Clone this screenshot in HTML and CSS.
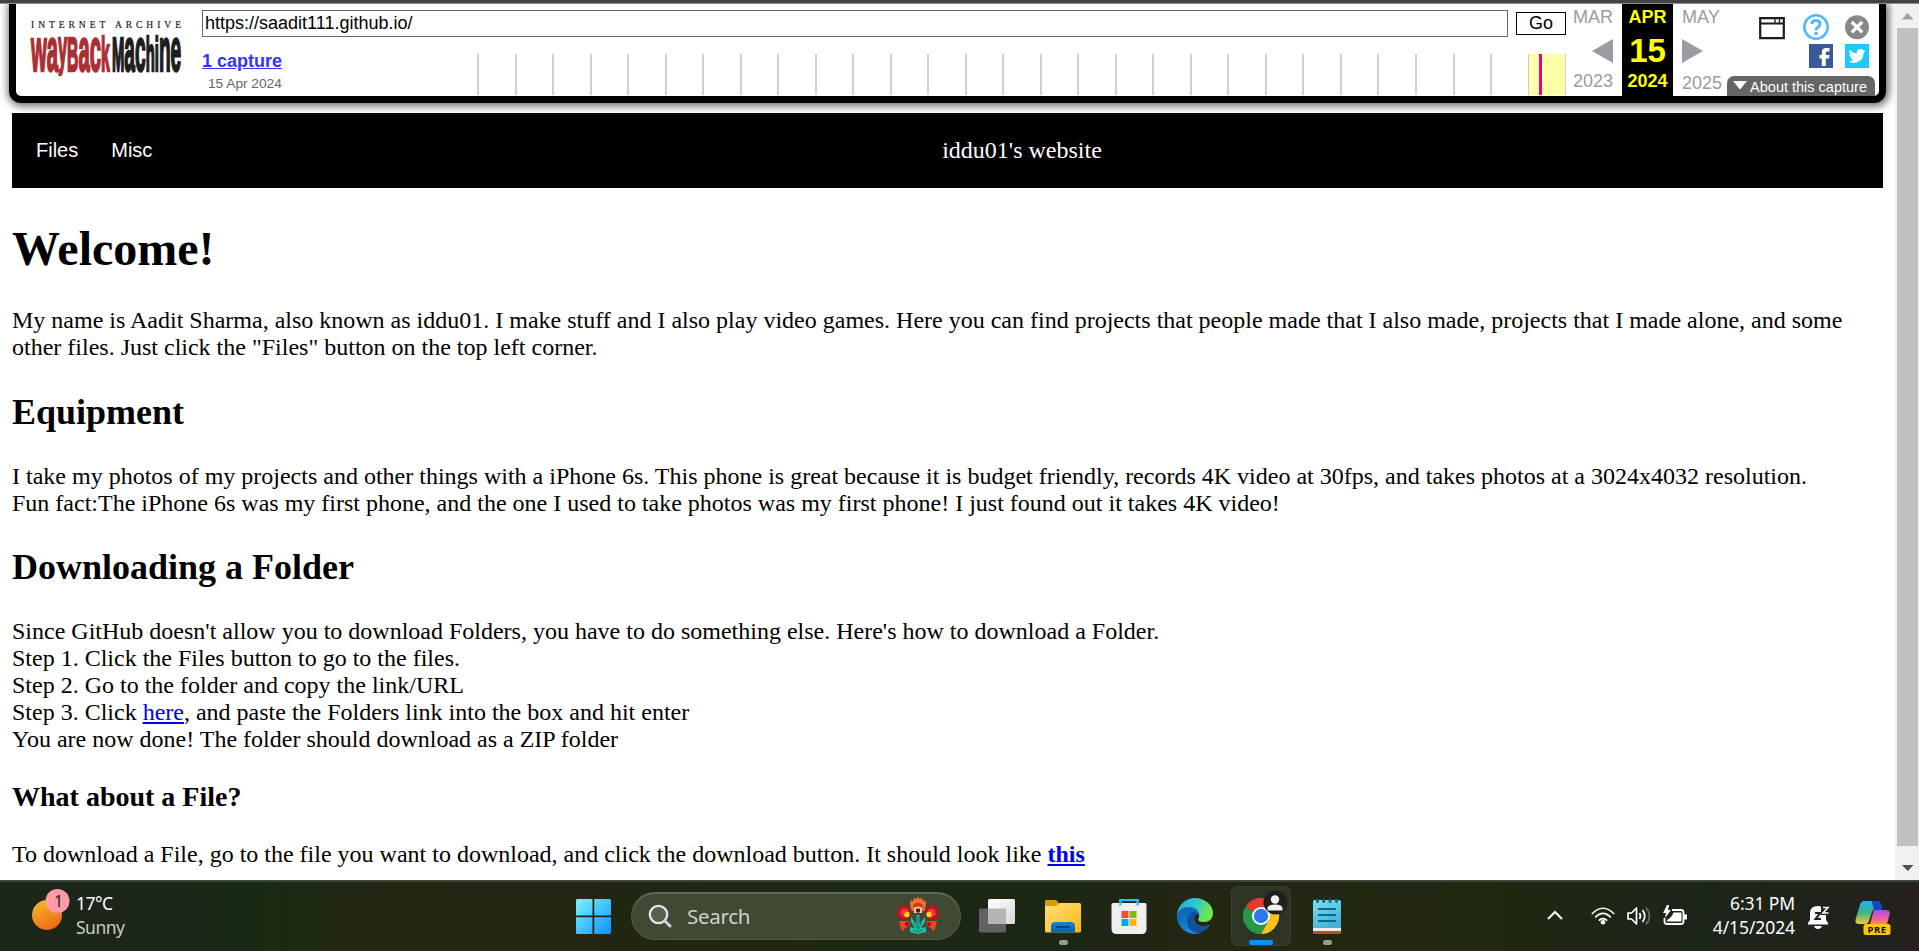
FILE: index.html
```html
<!DOCTYPE html>
<html lang="en">
<head>
<meta charset="utf-8">
<title>iddu01's website</title>
<link rel="stylesheet" href="styles.css">
</head>
<body>
<div class="window-edge"></div>
<div class="viewport">
  <div class="page">
    <header class="wayback">
      <svg class="wb-logo" width="160" height="86" viewBox="0 0 160 86">
        <text class="ia-name" x="7" y="21.5" textLength="150">INTERNET ARCHIVE</text>
        <g transform="translate(7 64.5) scale(.3 1)">
          <text class="wb-word wb-red" textLength="262" lengthAdjust="spacingAndGlyphs"><tspan class="low">wa</tspan><tspan class="mid" dy="-6">y</tspan><tspan class="cap" dy="6">B</tspan><tspan class="low">ac</tspan><tspan class="cap">k</tspan></text>
          <text class="wb-word wb-dark" x="270" textLength="231" lengthAdjust="spacingAndGlyphs"><tspan class="cap">M</tspan><tspan class="low">ac</tspan><tspan class="cap">hi</tspan><tspan class="low">ne</tspan></text>
        </g>
      </svg>
      <div class="wb-main">
        <div class="wb-form">
          <div class="wb-url">https://saadit111.github.io/</div>
          <div class="wb-go">Go</div>
        </div>
        <div class="wb-history">
          <div class="wb-captures">
            <a class="wb-count">1 capture</a>
            <span class="wb-range">15 Apr 2024</span>
          </div>
          <div class="wb-spark"><div class="wb-years"></div><div class="wb-current"></div></div>
        </div>
      </div>
      <div class="wb-dates">
        <div class="wb-col wb-prev"><span>MAR</span><svg width="22" height="24" viewBox="0 0 22 24"><path d="M22 0V24L1 12z" fill="#999ca0"/></svg><span>2023</span></div>
        <div class="wb-col wb-now"><b>APR</b><b class="wb-day">15</b><b>2024</b></div>
        <div class="wb-col wb-next"><span>MAY</span><svg width="22" height="24" viewBox="0 0 22 24"><path d="M0 0V24L21 12z" fill="#999ca0"/></svg><span>2025</span></div>
      </div>
      <div class="wb-tools">
        <div class="wb-icons">
          <svg width="26" height="26" viewBox="0 0 26 26"><path d="M1.2 4.2H24.8V24.2H1.2zM1 9.5H25" fill="none" stroke="#1c1c1c" stroke-width="2.2"/><path d="M16 4V9M20.5 4V9" stroke="#1c1c1c" stroke-width="1.3"/></svg>
          <svg width="26" height="26" viewBox="0 0 26 26"><circle cx="13" cy="13" r="11.7" fill="none" stroke="#55b9f5" stroke-width="2.6"/><path d="M8.8 10Q9 6.5 13 6.5T17 10Q17 12 14.8 13.2Q13 14.2 13 16.5" fill="none" stroke="#55b9f5" stroke-width="3"/><path d="M11.4 18h3.3v3h-3.3z" fill="#55b9f5"/></svg>
          <svg width="24" height="26" viewBox="0 0 24 26"><circle cx="12" cy="13.2" r="12" fill="#888"/><path d="M6.8 8l10.4 10.4M17.2 8L6.800 18.400" stroke="#fff" stroke-width="3.2"/></svg>
        </div>
        <div class="wb-icons wb-social">
          <svg width="24" height="24" viewBox="0 0 24 24"><path d="M0 0H24V24H0z" fill="#3b5998"/><path d="M12.800 22V14.500H10.500V11H12.800V8.500Q12.800 4 17 4H20.500V7.500H18.300Q16.800 7.500 16.800 9V11H20.500L20 14.500H16.800V22z" fill="#fff"/></svg>
          <svg width="24" height="24" viewBox="0 0 24 24"><path d="M0 0H24V24H0z" fill="#1dcaff"/><path transform="translate(3.600 3.600) scale(.7)" fill="#fff" d="M24 4.600a10 10 0 0 1-2.800.800 5 5 0 0 0 2.100-2.700 10 10 0 0 1-3.100 1.200 4.900 4.900 0 0 0-8.400 4.500A14 14 0 0 1 1.700 3.200 4.900 4.900 0 0 0 3.200 9.700a5 5 0 0 1-2.200-.600 4.900 4.900 0 0 0 3.900 4.900 5 5 0 0 1-2.200.100 4.900 4.900 0 0 0 4.600 3.400A10 10 0 0 1 0 19.500a14 14 0 0 0 21.500-12.400A10 10 0 0 0 24 4.600z"/></svg>
        </div>
        <div class="wb-about"><svg width="14" height="9" viewBox="0 0 14 9"><path d="M0 0H14L7 8.500z" fill="#fff"/></svg><span>About this capture</span></div>
      </div>
    </header>
    <nav class="site-nav">
      <div class="nav-links"><a>Files</a><a>Misc</a></div>
      <span>iddu01's website</span>
    </nav>
    <main class="content">
      <h1>Welcome!</h1>
      <p class="intro">My name is Aadit Sharma, also known as iddu01. I make stuff and I also play video games. Here you can find projects that people made that I also made, projects that I made alone, and some other files. Just click the "Files" button on the top left corner.</p>
      <h2>Equipment</h2>
      <p>I take my photos of my projects and other things with a iPhone 6s. This phone is great because it is budget friendly, records 4K video at 30fps, and takes photos at a 3024x4032 resolution.<br>Fun fact:The iPhone 6s was my first phone, and the one I used to take photos was my first phone! I just found out it takes 4K video!</p>
      <h2>Downloading a Folder</h2>
      <p>Since GitHub doesn't allow you to download Folders, you have to do something else. Here's how to download a Folder.<br>Step 1. Click the Files button to go to the files.<br>Step 2. Go to the folder and copy the link/URL<br>Step 3. Click <a href="#">here</a>, and paste the Folders link into the box and hit enter<br>You are now done! The folder should download as a ZIP folder</p>
      <h3>What about a File?</h3>
      <p>To download a File, go to the file you want to download, and click the download button. It should look like <a href="#"><b>this</b></a></p>
    </main>
  </div>
  <div class="scrollbar">
    <svg width="24" height="24" viewBox="0 0 24 24"><path d="M6.500 15.500L12.500 9L18.500 15.500z" fill="#a3a3a3"/></svg>
    <div class="thumb"></div>
    <svg width="24" height="34" viewBox="0 0 24 34"><path d="M7 19H18.500L12.700 25z" fill="#505050"/></svg>
  </div>
</div>
<footer class="taskbar">
  <div class="weather">
    <svg width="40" height="44" viewBox="0 0 40 44">
      <defs><linearGradient id="sun" x1=".2" y1="0" x2=".7" y2="1"><stop offset="0" stop-color="#f3b62c"/><stop offset="1" stop-color="#f06810"/></linearGradient></defs>
      <circle cx="15" cy="28" r="15" fill="url(#sun)"/><circle cx="25.500" cy="14" r="12" fill="#ff9aa6"/>
      <text class="badge" x="26.500" y="19.500">1</text>
    </svg>
    <div class="weather-text"><span>17°C</span><span class="dim">Sunny</span></div>
  </div>
  <div class="apps">
    <svg class="start" width="35" height="35" viewBox="0 0 35 35">
      <defs><linearGradient id="win" gradientUnits="userSpaceOnUse" x1="0" y1="0" x2="35" y2="35"><stop offset="0" stop-color="#7df3ff"/><stop offset="1" stop-color="#0a93ff"/></linearGradient></defs>
      <path d="M1.500 0H16.500V16.500H0V1.500Q0 0 1.500 0zM18.300 0H33.500Q35 0 35 1.500V16.500H18.300zM0 18.300H16.500V35H1.500Q0 35 0 33.500zM18.300 18.300H35V33.500Q35 35 33.500 35H18.300z" fill="url(#win)"/>
    </svg>
    <div class="search">
      <svg width="24" height="24" viewBox="0 0 24 24"><circle cx="10.500" cy="10.500" r="8.700" fill="#fff2" stroke="#e2e5ea" stroke-width="2.300"/><path d="M17 17L22 22" stroke="#cdd2de" stroke-width="3" stroke-linecap="round"/></svg>
      <span>Search</span>
      <svg width="44" height="40" viewBox="0 0 44 40">
        <path d="M14 8L14.500 4.500 17 5 18 2 20.500 3 22 .500 23.500 3 26 2 27 5 29.500 4.500 30 8 28.500 15H15.500z" fill="#f0702b"/><path d="M17 9Q22 4 27 9L25 15H19z" fill="#c93a10"/><path d="M18 12Q22 9 26 12V17H18z" fill="#ffd0b0"/><circle cx="22" cy="14.500" r="2.300" fill="#55151c"/>
        <path d="M.500 17L2 14 2.500 11 6 10.500 8 8.500 11 10.500 14 12 15 19 10 24 3 23 2.500 20zM43.500 17L42 14 41.500 11 38 10.500 36 8.500 33 10.500 30 12 29 19 34 24 41 23 41.500 20z" fill="#c9101e"/><path d="M4 18L6 13 11 13 13 18 9 22zM40 18L38 13 33 13 31 18 35 22z" fill="#ef3b3a"/><circle cx="11" cy="18.500" r="2.700" fill="#ffd51c"/><circle cx="33" cy="18.500" r="2.700" fill="#ffd51c"/>
        <path d="M3 25L13 25 14 29 9 32 7 35 5 33zM41 25L31 25 30 29 35 32 37 35 39 33z" fill="#f24322"/><circle cx="11" cy="28" r="2" fill="#8f1420"/><circle cx="33" cy="28" r="2" fill="#8f1420"/>
        <path d="M22 38L14 36 14 31 19 32 15 26 15 21 20.500 28 20.500 19 23.500 19 23.500 28 29 21 29 26 25 32 30 31 30 36z" fill="#1fbfa3"/><path d="M22 20V34M17 34L22 36L27 34M18 26L22 33L26 26" stroke="#117b6d" fill="none"/>
      </svg>
    </div>
    <div class="app"><svg width="36" height="36" viewBox="0 0 36 36"><defs><linearGradient id="tv" x2="1" y2="1"><stop stop-color="#fff"/><stop offset="1" stop-color="#d8d8d8"/></linearGradient></defs><rect y="10.500" width="27" height="24" rx="1.500" fill="#626264"/><rect x="9" y="1" width="27" height="25" rx="1.500" fill="url(#tv)"/><path d="M9 10.500H27V26H9z" fill="#b5b6b4"/></svg></div>
    <div class="app"><svg width="36" height="36" viewBox="0 0 36 36"><defs><linearGradient id="fo" x2="1" y2="1"><stop stop-color="#ffe07c"/><stop offset="1" stop-color="#fbb612"/></linearGradient><linearGradient id="fb" x2="0" y2="1"><stop stop-color="#1587d8"/><stop offset="1" stop-color="#0d5ea8"/></linearGradient></defs><path d="M0 3.500Q0 2 1.500 2H11L15 6V12H0z" fill="#db9b0c"/><path d="M0 8H11L15 5H34.500Q36 5 36 6.500V33Q36 34.500 34.500 34.500H1.500Q0 34.500 0 33z" fill="url(#fo)"/><path d="M6 34.500V28Q6 24 10 24H26Q30 24 30 28V34.500z" fill="url(#fb)"/><path d="M11 29H25" stroke="#08468a" stroke-width="2"/></svg><i class="dot"></i></div>
    <div class="app"><svg width="36" height="36" viewBox="0 0 36 36"><path d="M9.300 8V2.200H26.700V8" fill="none" stroke="#35b8f4" stroke-width="2.300"/><path d="M.5 6.500Q.5 5 2 5H34Q35.500 5 35.500 6.500V31Q35.500 36 30.500 36H5.500Q.5 36 .5 31z" fill="#efefef"/><path d="M9.300 4V7.500M26.700 4V7.500" stroke="#35b8f4" stroke-width="2.300"/><path d="M10.500 13H17.500V20H10.500z" fill="#f25022"/><path d="M18.500 13H25.500V20H18.500z" fill="#7fba00"/><path d="M10.500 21H17.500V28H10.500z" fill="#00a4ef"/><path d="M18.500 21H25.500V28H18.500z" fill="#ffb900"/></svg></div>
    <div class="app"><svg width="36" height="36" viewBox="0 0 36 36"><defs><linearGradient id="e1" x2="1" y2=".3"><stop stop-color="#2aa5dd"/><stop offset=".5" stop-color="#2cc3d5"/><stop offset="1" stop-color="#70e848"/></linearGradient><linearGradient id="e2" x2=".6" y2="1"><stop stop-color="#0c59a5"/><stop offset="1" stop-color="#1791df"/></linearGradient></defs><path d="M0 18C0 8 8 0 18 0S36 7 36 15C36 21 32 24 27 24C22 24 20.500 22.500 21.500 20.500C24 16 20 10 12 10C5 10 1 14 0 18z" fill="url(#e1)"/><path d="M0 18C1 12 6 9 12 9C18 9 22 12 22 17C21 13 11 13 11 22C11 28 15 35 23 35.300C10 38.500 0 29 0 18z" fill="url(#e2)"/><path d="M17 13.500C14 14 10 17 10 23C10 29 15 35 22 35.500C27 34 31 31 33 27.500C33 26.500 32 26.500 31 27C23 30 16 25 18 18.500Q19 16 22 17Q21 14 17 13.500z" fill="#124f9c"/></svg></div>
    <div class="app active"><svg width="46" height="46" viewBox="0 0 46 46">
      <path d="M18 25L2.400 16A18 18 0 0 1 33.600 16H18z" fill="#e5392e"/><path d="M18 25L25.800 29.500 18 43A18 18 0 0 1 2.400 16z" fill="#25984b"/><path d="M18 16H33.600A18 18 0 0 1 18 43L25.800 29.500z" fill="#fcc21b"/><circle cx="18" cy="25" r="9" fill="#fff"/><circle cx="18" cy="25" r="7.200" fill="#2a78ee"/>
      <circle cx="32.500" cy="11.500" r="12" fill="#1f1f1f"/><circle cx="32" cy="8.500" r="4.200" fill="#f1f1f1"/><path d="M24.500 19.500V17Q25 13.500 32 13.500T39.500 17V19.500z" fill="#f1f1f1"/></svg><i class="dot wide"></i></div>
    <div class="app"><svg width="28" height="36" viewBox="0 0 28 36"><defs><linearGradient id="np" x2=".5" y2="1"><stop stop-color="#7fdcf0"/><stop offset="1" stop-color="#45b3d3"/></linearGradient></defs><path d="M0 31H28V34.500Q28 36 26.500 36H1.500Q0 36 0 34.500z" fill="#b95411"/><path d="M0 29H28V33H0z" fill="#eee"/><path d="M0 3.500Q0 2 1.500 2H26.500Q28 2 28 3.500V30H0z" fill="url(#np)"/><path d="M4.500 2V3.500M10.700 2V3.500M17 2V3.500M23.500 2V3.500" stroke="#0a5e80" stroke-width="2.800" stroke-linecap="round"/><path d="M5 11H23M5 17H23M5 23H23" stroke="#08688d" stroke-width="2"/></svg><i class="dot"></i></div>
  </div>
  <div class="tray">
    <svg class="chevron" width="16" height="10" viewBox="0 0 16 10"><path d="M1 9L8 2L15 9" fill="none" stroke="#fff" stroke-width="2"/></svg>
    <svg class="wifi" width="24" height="18" viewBox="0 0 24 18"><path d="M.8 7Q12-4.500 23.200 7M4.300 10.400Q12 2.500 19.700 10.400M7.800 13.700Q12 9.500 16.200 13.700" fill="none" stroke="#fff" stroke-width="1.700"/><circle cx="12" cy="15.300" r="2.300" fill="#fff"/></svg>
    <svg class="sound" width="26" height="20" viewBox="0 0 26 20"><path d="M1 7H4.500L9.500 2V18L4.500 13H1z" fill="none" stroke="#fff" stroke-width="1.700" stroke-linejoin="round"/><path d="M12.500 7Q14.500 10 12.500 13M15.500 4Q20 10 15.500 16" fill="none" stroke="#fff" stroke-width="1.700"/><path d="M19 1.500Q26 10 19 18.500" fill="none" stroke="#667064" stroke-width="1.700"/></svg>
    <svg class="battery" width="25" height="21" viewBox="0 0 25 21"><path d="M9 5H18Q20.500 5 20.500 7.500V16.500Q20.500 19 18 19H4Q1.500 19 1.500 16.500V13" fill="none" stroke="#fff" stroke-width="1.800"/><path d="M10.500 7.500H18.500V16.500H4V15Q8.500 13 10.500 7.500z" fill="#fff"/><path d="M21 9.500H24V14.500H21z" fill="#fff"/><path d="M4 0L0 8H3L2 13L8 5H5L6 0z" fill="#fff"/></svg>
    <div class="clock"><span>6:31 PM</span><span>4/15/2024</span></div>
    <svg class="bell" width="22" height="24" viewBox="0 0 22 24"><path d="M0 18L2 15V8Q2 1 10 1Q18 1 18 8V15L20 18V19.500H0z" fill="#fff"/><path d="M6 21H14Q13 24 10 24T6 21z" fill="#fff"/><path d="M7 8H12.500L7.500 14H13" fill="none" stroke="#1c2519" stroke-width="2"/><path d="M13 1H22V10H13z" fill="#1c2519"/><path d="M15 2.500H20L15 8H20.500" fill="none" stroke="#fff" stroke-width="1.600"/></svg>
    <svg class="copilot" width="36" height="36" viewBox="0 0 36 36"><defs><linearGradient id="c1" x2="0" y2="1"><stop stop-color="#27aef5"/><stop offset=".5" stop-color="#3bb487"/><stop offset="1" stop-color="#f7c631"/></linearGradient><linearGradient id="c2" x2="0" y2="1"><stop stop-color="#a64bf0"/><stop offset=".6" stop-color="#ee6399"/><stop offset="1" stop-color="#f58a60"/></linearGradient></defs><path d="M9 1H22Q25 1 26 5L27 9H20Q18 9 17 12L14 21Q13 24 10 24H4Q-1 24 1 18L5 5Q6 1 9 1z" fill="url(#c1)"/><path d="M17 1H22Q25 1 26 5L27.500 10H21Q19 10 18 7z" fill="#1743c7"/><path d="M20 10H31Q36 10 34.500 15L32 24H15L18 13Q18.500 10 20 10z" fill="url(#c2)"/><rect x="8.500" y="24" width="27" height="11" rx="2.500" fill="#fbc513"/><text class="pre" x="22" y="32.800">PRE</text></svg>
  </div>
</footer>
</body>
</html>
```
FILE: styles.css
```css
* { box-sizing: border-box; }
body { margin: 0; width: 1919px; height: 951px; overflow: hidden; display: flex; flex-direction: column; background: #fff; color: #000; font: 24px/27px "Liberation Serif", serif; }
svg { display: block; flex: none; }
.window-edge { height: 4px; flex: none; background: #434343; border-bottom: 1px solid #8d8d8d; }
.viewport { height: 876px; display: flex; flex: none; }
.page { width: 1895px; flex: none; overflow: hidden; }

/* Archive toolbar */
.wayback { height: 99px; width: 1877px; margin-left: 9px; border: 7px solid #000; border-top: 0; border-radius: 0 0 12px 12px; box-shadow: 1px 1px 8px 2px #0009; background: #fff; display: flex; font: 18px/20px "Liberation Sans", Arial, sans-serif; }
.wb-logo { margin: 2px 0 0 8px; overflow: visible; }
.ia-name { font: 9.500px "Liberation Serif", serif; fill: #222; stroke: #222; stroke-width: .2; }
.wb-word { font-family: "Liberation Sans", Arial, sans-serif; font-weight: 700; stroke-width: 2.500px; }
.wb-red { fill: #ab2e33; stroke: #ab2e33; }
.wb-dark { fill: #1d1d1d; stroke: #1d1d1d; }
.low { font-size: 62px; }
.mid { font-size: 50px; }
.cap { font-size: 48px; }
.wb-main { width: 1364px; margin-left: 18px; }
.wb-form { display: flex; justify-content: space-between; padding-top: 6px; }
.wb-url { width: 1306px; height: 27px; border: 1px solid #666; padding: 2px 2px 0; }
.wb-go { width: 50px; height: 23px; margin-top: 2px; border: 1px solid #000; text-align: center; }
.wb-history { display: flex; justify-content: space-between; }
.wb-captures { padding-top: 15px; }
.wb-count { display: block; font-weight: 700; color: #33f; text-decoration: underline; line-height: 19px; }
.wb-range { display: block; font-size: 13.700px; color: #666; padding: 3px 0 0 6px; }
.wb-spark { display: flex; width: 1089px; height: 41px; margin-top: 17px; border-right: 1px solid #ccc; }
.wb-years { width: 1051px; background: repeating-linear-gradient(90deg, #d0d0d0 0 2px, transparent 2px 37.520px); }
.wb-current { flex: 1; background: linear-gradient(90deg, #ccc 0 1.500px, #ffffa5 1.500px 11px, #ec008c 11px 14px, #ffffa5 14px); }
.wb-dates { display: flex; color: #99a; }
.wb-col { height: 92px; display: flex; flex-direction: column; }
.wb-prev { width: 56px; padding-right: 9px; align-items: flex-end; }
.wb-now { width: 51px; background: #000; color: #ff0; align-items: center; }
.wb-next { width: 54px; padding-left: 9px; }
.wb-col > :first-child { margin-top: 3px; }
.wb-col svg { margin: 12px 0 8px; }
.wb-next span:last-child { margin-top: 2px; }
.wb-day { font-size: 33px; line-height: 36px; margin: 6px 0 2px; }
.wb-tools { width: 148px; height: 92px; display: flex; flex-direction: column; }
.wb-icons { display: flex; justify-content: flex-end; padding: 10px 6px 0 0; gap: 16px; }
.wb-icons svg:first-child:not(.wb-social svg) { margin-right: 2px; }
.wb-social { gap: 12px; padding-top: 4px; }
.wb-about { height: 20px; margin-top: auto; background: #666; color: #fff; border-radius: 7px 7px 0 0; display: flex; align-items: center; justify-content: space-between; padding: 2px 8px 0 6px; font-size: 14.500px; line-height: 18px; }
.wb-about svg { margin-top: -3px; }

/* Site */
.site-nav { width: 1871px; height: 75px; margin: 10px 0 0 12px; padding-left: 149px; background: #000; color: #fff; display: flex; align-items: center; justify-content: center; position: relative; }
.nav-links { position: absolute; left: 24px; top: 25px; display: flex; gap: 33px; font: 20px/25px "Liberation Sans", Arial, sans-serif; }
.content { margin: 0 12px; }
.content h1 { font-size: 48px; line-height: 55px; margin: 33px 0 31px; }
.content h2 { font-size: 36px; line-height: 41px; margin: 30px 0; }
.content h3 { font-size: 28px; line-height: 32px; margin: 28px 0; }
.content p { margin: 0; }
.content .intro { padding-bottom: 1px; }
.content a { color: #00e; }

/* Scrollbar */
.scrollbar { width: 24px; background: #f1f1f1; display: flex; flex-direction: column; }
.thumb { flex: 1; margin: 0 1px 0 2px; background: #c1c1c1; }

/* Taskbar */
.taskbar { height: 71px; flex: none; border-top: 2px solid #3d463a; display: flex; color: #fff; font: 17.500px/24px "Noto Sans", "Open Sans", sans-serif; background: linear-gradient(90deg, #1c2618 0, #1b2718 160px, #182b14 240px, #252713 390px, #222612 600px, #1b2914 950px, #1c2714 1080px, #242613 1200px, #202812 1500px, #1c2519 1700px, #25211d 1919px); }
.weather { width: 576px; display: flex; padding: 5px 0 0 32px; gap: 4px; }
.weather-text { display: flex; flex-direction: column; padding-top: 4px; letter-spacing: -.5px; }
.dim { color: #c8ccc6; }
.badge { font: 16px "Noto Sans", sans-serif; fill: #222; text-anchor: middle; }
.apps { display: flex; width: 971px; }
.start { margin: 17px 20px 0 0; }
.search { width: 330px; height: 48px; margin: 10px 3px 0 0; border-radius: 24px; border: 1px solid #525c47; border-top: 2px solid #5d6651; background: #3f4933; display: flex; align-items: center; padding: 0 20px 2px 16px; font-size: 20.500px; color: #cfd3cb; }
.search span { flex: 1; margin-left: 15px; letter-spacing: -.3px; }
.app { width: 60px; height: 60px; margin: 4px 3px 0; display: flex; flex-direction: column; align-items: center; padding-top: 12px; position: relative; }
.active { background: #2f3525; border-radius: 7px; box-shadow: inset 0 0 0 1px #383e2f; padding: 5px 0 0 10px; }
.dot { position: absolute; left: 26px; bottom: 1px; width: 9px; height: 5px; border-radius: 3px; background: #989c93; }
.wide { left: 18px; width: 24px; background: #0a8fff; }
.tray { display: flex; flex: none; }
.chevron { margin-top: 28px; }
.wifi { margin: 25px 0 0 28px; }
.sound { margin: 24px 0 0 12px; }
.battery { margin: 23px 0 0 10px; }
.clock { width: 107px; display: flex; flex-direction: column; align-items: flex-end; padding-top: 9px; letter-spacing: -.1px; }
.bell { margin: 23px 0 0 13px; }
.copilot { margin: 18px 0 0 25px; }
.pre { font: 700 9.500px "Open Sans", sans-serif; fill: #111; text-anchor: middle; letter-spacing: .5px; }
```
